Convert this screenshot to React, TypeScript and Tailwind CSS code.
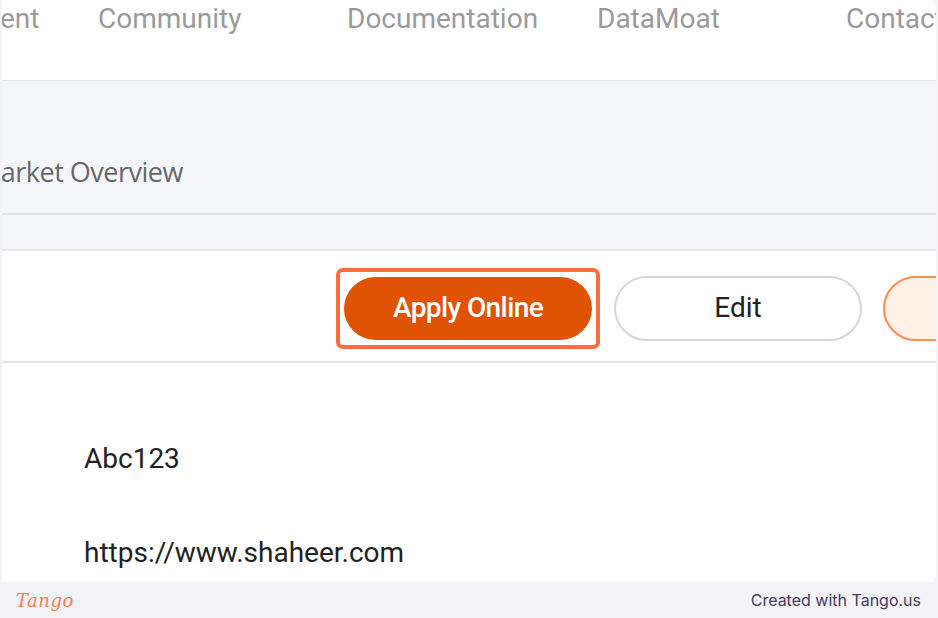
import React from 'react';

const navItems = [
  { label: 'ent', width: 'w-[98px]' },
  { label: 'Community', width: 'w-[249px]' },
  { label: 'Documentation', width: 'w-[250px]' },
  { label: 'DataMoat', width: 'w-[249px]' },
  { label: 'Contact', width: 'w-[120px]' },
];

const App: React.FC = () => {
  return (
    <div className="w-[938px] h-[618px] bg-[#f3f2f7] flex flex-col overflow-hidden font-['Roboto',sans-serif]">
      {/* Captured page */}
      <div className="h-[582px] ml-[2px] mr-[2px] rounded-tr-lg rounded-br-md overflow-hidden bg-white flex flex-col">
        {/* Top nav */}
        <div className="h-[81px] shrink-0 bg-white border-b border-[#e3e3e6] shadow-[0_1px_2px_rgba(0,0,0,0.05)] flex items-start">
          <div className="flex whitespace-nowrap pt-[2px] -ml-[2px]">
            {navItems.map((item) => (
              <div key={item.label} className={`${item.width} shrink-0 text-[28px] leading-[34px] text-[#9a9a9a]`}>
                {item.label}
              </div>
            ))}
          </div>
        </div>

        {/* Grey band */}
        <div className="bg-[#f5f6fa] h-[168px] shrink-0 flex flex-col">
          <div className="h-[134px] border-b-2 border-[#e1e2e6] flex items-end pb-[25px] overflow-hidden">
            <span className="-ml-[25px] whitespace-nowrap text-[27px] leading-[32px] text-[#676767] font-['Open_Sans',sans-serif] tracking-[-0.5px]">
              Market Overview
            </span>
          </div>
        </div>

        {/* Action buttons */}
        <div className="h-[114px] shrink-0 border-t-2 border-b-2 border-[#e6e6e9] flex items-center pt-[4px] pl-[334px] whitespace-nowrap">
          <div className="shrink-0 border-4 border-[#ff6d3f] rounded-[7px] px-[4px] py-[5px] bg-white">
            <button className="w-[248px] h-[63px] rounded-full bg-[#e05204] text-white text-[28px] font-medium tracking-[-0.6px]">
              Apply Online
            </button>
          </div>
          <button className="shrink-0 ml-[14px] w-[248px] h-[65px] rounded-full border-2 border-[#d4d6dd] bg-white text-[#222] text-[28px]">
            Edit
          </button>
          <button className="shrink-0 ml-[21px] w-[248px] h-[65px] rounded-full border-2 border-[#ff8b4f] bg-[#fff0e6]" />
        </div>

        {/* Details */}
        <div className="flex-1 pl-[82px] pt-[79px] text-[28px] leading-[34px] text-[#222]">
          <div>Abc123</div>
          <div className="mt-[60px]">https://www.shaheer.com</div>
        </div>
      </div>

      {/* Tango footer */}
      <div className="flex-1 flex items-center justify-between pl-[16px] pr-[17px]">
        <span className="italic font-['DejaVu_Serif',serif] text-[18px] text-[#ff7a4f] tracking-[0.5px]">
          Tango
        </span>
        <span className="text-[16px] text-[#463a62] font-['Inter',sans-serif]">Created with Tango.us</span>
      </div>
    </div>
  );
};

export default App;
